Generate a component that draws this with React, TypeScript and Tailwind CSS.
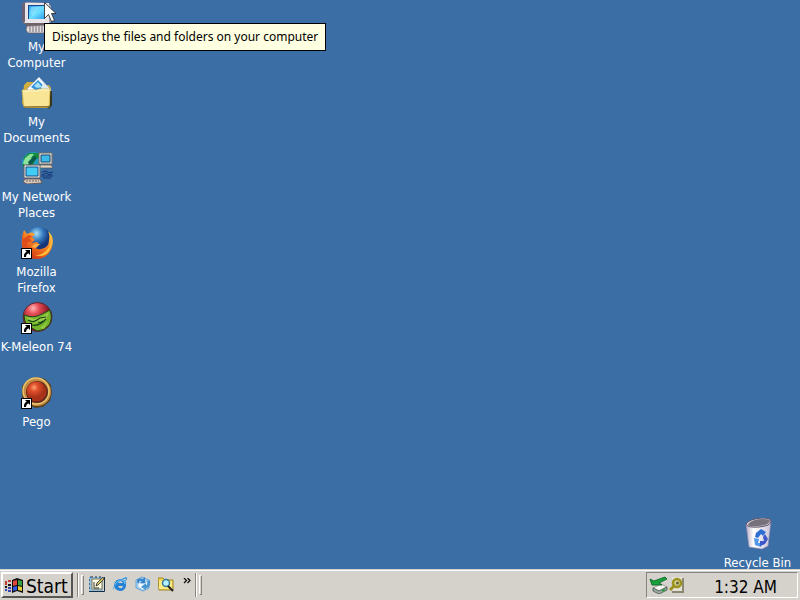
import type { ReactNode } from "react";

function Svg({ size = 32, children }: { size?: 16 | 32; children: ReactNode }) {
  return (
    <svg
      viewBox={size === 32 ? "0 0 32 32" : "0 0 16 16"}
      className={size === 32 ? "block h-8 w-8 shrink-0" : "block h-4 w-4 shrink-0"}
      aria-hidden="true"
    >
      {children}
    </svg>
  );
}

function Shortcut() {
  return (
    <g>
      <rect x="0.5" y="21.5" width="10" height="10" fill="#fff" stroke="#000" />
      <path d="M4 23h5v5l-1.700-1.700q-2.300 1-2.300 3.700h-2q-.5-4 2.700-5.300z" fill="#000" />
    </g>
  );
}

function ComputerIcon() {
  return (
    <Svg>
      <defs>
        <linearGradient id="screen" x2="1" y2="1">
          <stop offset="0" stopColor="#2b9df0" />
          <stop offset=".5" stopColor="#6fe0ff" />
          <stop offset="1" stopColor="#2c9cf0" />
        </linearGradient>
      </defs>
      <path d="M1 2 5 0l22 1 3 3v16l-4 3-22-1-3-3z" fill="#a9a3ae" />
      <path d="m1 2 4-2v19l-4 2z" fill="#6c5f72" />
      <path d="M4 1h24v20H4z" fill="#e9e5e8" />
      <path d="M7 3h17v14H7z" fill="#15458a" />
      <path d="M8 4h16v13H8z" fill="url(#screen)" />
      <path d="m10 5 9 0-7 9-3-3z" fill="#9cecff" opacity=".5" />
      <path d="M3 21h25l-1 3H6z" fill="#6c6267" />
      <path d="m6 24 20-1 3 5-2 3H7l-2-3z" fill="#e0dbdc" stroke="#665b60" strokeWidth=".7" />
      <path d="M8 25h16M8 27h17M8 29h16" stroke="#77717a" strokeDasharray="2 1" />
    </Svg>
  );
}

function DocumentsIcon() {
  return (
    <Svg>
      <path d="M3 8 6 5h7l3 3h12l2 3v17l-2 3H4l-3-5z" fill="#d3ae3d" />
      <path d="m6 12 12-12 12 13-3 7H9z" fill="#f8fbff" stroke="#8ba3c6" strokeWidth=".7" />
      <path d="m10 10 7-7 7 7-5 6z" fill="#3294dc" />
      <path d="m13 9 4-4 4 5-5 1z" fill="#a0def6" />
      <path d="m22 6 8 8-3 5-7-8z" fill="#dce9ef" />
      <path d="M30 14v14l-3 3" fill="none" stroke="#37351e" strokeWidth="2" />
      <path d="M1 13h14l3-1h11l-1 18H3z" fill="#f8e596" stroke="#d5b650" strokeWidth=".7" />
      <path d="M2 14h14l3-1h9" fill="none" stroke="#fff9cf" />
      <path d="m3 30 25-.3" stroke="#6f5820" />
    </Svg>
  );
}

function NetworkIcon() {
  return (
    <Svg>
      <circle cx="12" cy="11" r="11" fill="#219ac0" />
      <path d="M2 6 8 1l9 0 3 4-5 2-3 5 4 3-3 5-8 0-4-7 3-3z" fill="#128b3c" />
      <path d="M4 6 9 2l4 0-3 4 3 1-4 4-5 3-2-3z" fill="#8ce49a" />
      <path d="m7 10 6-6 3 2-7 8z" fill="#0b5a4c" />
      <path d="M18 1h13v11H18z" fill="#e2e2d9" stroke="#756e69" />
      <path d="M20 3h9v7h-9z" fill="#3bb9e9" stroke="#1d4971" />
      <path d="M18 13h12l2 3H17z" fill="#ded5c4" stroke="#594f48" strokeWidth=".7" />
      <path d="M3 13h16v13H3z" fill="#e8e9e5" stroke="#655e65" />
      <path d="M5 15h12v9H5z" fill="#42cbf5" stroke="#164a82" />
      <path d="m4 27 15 0 2 4-15 1-4-2z" fill="#d9cbbb" stroke="#594a4a" strokeWidth=".8" />
      <path d="M5 29h13" stroke="#6d6369" strokeDasharray="2 1" />
      <path d="M20 24h12M21 20l4-1 3 2 4-1M21 23l4-2 3 2 3-1M22 26h8" fill="none" stroke="#143575" />
    </Svg>
  );
}

function FirefoxIcon() {
  return (
    <Svg>
      <defs>
        <radialGradient id="fxGlobe" cx=".4" cy=".25">
          <stop stopColor="#a8e1f6" />
          <stop offset=".5" stopColor="#397fc3" />
          <stop offset="1" stopColor="#15377a" />
        </radialGradient>
        <linearGradient id="fxFur" x1=".2" x2=".8" y1="1" y2="0">
          <stop stopColor="#c72b13" />
          <stop offset=".5" stopColor="#f47a21" />
          <stop offset="1" stopColor="#ffd044" />
        </linearGradient>
      </defs>
      <circle cx="18" cy="13" r="13" fill="url(#fxGlobe)" />
      <path d="M27 4q7 6 4 16-4 12-16 12Q3 31 1 19 0 9 3 3l3 4q4-3 8 0l-3 3 3 3-4 3 6-1 2 2-4 3q2 3 6 2 8-1 8-9 1-5-1-9z" fill="url(#fxFur)" />
      <path d="m3 5-1 7 6-4 4 2-4 1 3 3-5 2q0 8 8 10-9-1-12-8-2-7 1-13z" fill="#df4d1c" />
      <path d="m10 20 4-3 5 0-4 4z" fill="#ffb046" />
      <path d="M29 7q3 10-3 16-5 6-13 5 13 4 17-8 2-7-1-13z" fill="#ffc13c" />
      <Shortcut />
    </Svg>
  );
}

function MeleonIcon() {
  return (
    <Svg>
      <defs>
        <radialGradient id="meleonRed" cx=".35" cy=".2">
          <stop stopColor="#ffb6b6" />
          <stop offset=".4" stopColor="#e64d57" />
          <stop offset="1" stopColor="#911c27" />
        </radialGradient>
      </defs>
      <circle cx="16.500" cy="15" r="14.500" fill="url(#meleonRed)" stroke="#5a2631" />
      <path d="M3 13q10 4 18-1l8-4q3 9-1 15-5 6-12 6L6 23q-3-4-3-10z" fill="#76b42b" stroke="#21441b" />
      <path d="m5 15 9 2 8-3 6-4-3 7-9 4-8-2z" fill="#9acb48" />
      <path d="M7 18q5 3 9 0l3-2 6-1M10 23q8 2 15-6M17 20l2 1 3-2" stroke="#17451a" fill="none" strokeWidth="1.200" />
      <path d="m19 26 8-7-4 8z" fill="#8fca41" />
      <Shortcut />
    </Svg>
  );
}

function PegoIcon() {
  return (
    <Svg>
      <defs>
        <radialGradient id="pego" cx=".38" cy=".3">
          <stop stopColor="#ffa070" />
          <stop offset=".4" stopColor="#df4f2c" />
          <stop offset="1" stopColor="#a83219" />
        </radialGradient>
      </defs>
      <path d="M8 2 16 0l8 2 6 6 1 8-2 8-7 6-8 1-8-4-5-7V9z" fill="#5c4220" />
      <circle cx="16" cy="15" r="14" fill="#c58d43" />
      <circle cx="15" cy="14" r="13" fill="none" stroke="#ebc66d" strokeWidth="1.5" />
      <circle cx="16" cy="15" r="11" fill="#60291c" />
      <circle cx="15.500" cy="14.500" r="10" fill="url(#pego)" />
      <Shortcut />
    </Svg>
  );
}

function RecycleIcon() {
  return (
    <Svg>
      <defs>
        <linearGradient id="bin">
          <stop stopColor="#b3abc3" />
          <stop offset=".3" stopColor="#fff" />
          <stop offset="1" stopColor="#c8c3d5" />
        </linearGradient>
      </defs>
      <path d="m4 6 25-3-3 25-6 3-13-2z" fill="url(#bin)" stroke="#9488ae" strokeWidth=".6" />
      <path d="M4 6Q7 1 20 0q9 0 9 3 0 5-12 6Q5 10 4 6z" fill="#d7d1dd" stroke="#625367" />
      <path d="M6 6q5-5 15-5 7 0 7 2-2 5-13 5-9 1-9-2z" fill="#77717b" />
      <path d="m14 15 5-4 5 3-3 4-2-2-3 4-3-1z" fill="#2d6ed5" />
      <path d="m12 20 5 1-1 4 4 0-1 4-6-2z" fill="#5098ec" />
      <path d="m23 16 3 5-3 5-5 2v-5l4 0-1-4z" fill="#3d56c8" />
    </Svg>
  );
}

function WindowsIcon() {
  return (
    <svg viewBox="0 0 20 16" className="block h-4 w-5 shrink-0" aria-hidden="true">
      <path d="m7 2 5-2 6 2v13l-6-2-5 2z" fill="#100f13" />
      <path d="m8 3 4-1v5L8 8z" fill="#df4936" />
      <path d="m13 2 4 1v5l-4-1z" fill="#39a143" />
      <path d="m8 9 4-1v4l-4 1z" fill="#305ae4" />
      <path d="m13 8 4 1v4l-4-1z" fill="#edcf37" />
      <path d="M0 4h2m1-1h3M0 6h2" stroke="#c13b30" strokeWidth="2" />
      <path d="M3 7h3M0 9h2" stroke="#181515" strokeWidth="2" />
      <path d="M3 10h3M0 12h2m1 1h3" stroke="#3641b2" strokeWidth="2" />
    </svg>
  );
}

function ShowDesktopIcon() {
  return (
    <Svg size={16}>
      <path d="M0 1h14v14H0z" fill="#8fbce0" />
      <path d="M0 15.500h15.500V1" fill="none" stroke="#152b40" />
      <path d="M3 3h10v10H3z" fill="#fffde4" stroke="#837b4a" />
      <path d="M1 1h3m2 0h2m2 0h2M0 3v2m0 2v2m0 2v2" stroke="#182f42" />
      <path d="m7 10 1-3 6-6 1 2-6 6z" fill="#d7c66c" stroke="#222" strokeWidth=".8" />
      <path d="M5 6v6h5" fill="none" stroke="#333" />
    </Svg>
  );
}

function ExplorerIcon() {
  return (
    <Svg size={16}>
      <path d="M14 10q-1 5-6 5-6-1-6-6 1-6 7-6 6 0 5 7H6q1 3 4 2l1-2zM6 7h5q-1-2-3-2t-2 2z" fill="#2482d6" fillRule="evenodd" />
      <path d="M3 9q2-5 7-5 3 0 3 4" fill="none" stroke="#70cef9" />
      <path d="M2 14Q-1 14 3 9q6-7 11-8 3 1-1 5 2-4-1-3-4 1-9 7-3 4-1 4z" fill="#399be5" />
    </Svg>
  );
}

function OutlookIcon() {
  return (
    <Svg size={16}>
      <path d="m1 4 6-3 7 3v8l-6 3-7-3z" fill="#a7d0f1" stroke="#6ba6d6" />
      <path d="m3 6 5 2 5-3v6l-5 3-5-3z" fill="#f1f8fd" stroke="#8bbce0" strokeWidth=".7" />
      <path d="M2 6Q2 1 8 3l2-2v6H5l2-2Q3 4 4 8z" fill="#3384cc" />
      <path d="M15 4q1 8-4 8v2l-5-3 5-4v2q2 0 1-4z" fill="#4a95d4" />
    </Svg>
  );
}

function SearchIcon() {
  return (
    <Svg size={16}>
      <path d="M0 2h5l2 2h8v10H1z" fill="#f4d34e" stroke="#a08523" />
      <path d="M1 5h13v8H1z" fill="#ffec83" />
      <circle cx="8" cy="7" r="3.500" fill="#b6f0fa" stroke="#347a99" strokeWidth="1.500" />
      <path d="m10 10 5 5" stroke="#222" strokeWidth="2" />
    </Svg>
  );
}

function UnplugIcon() {
  return (
    <svg viewBox="0 0 20 18" className="block h-[18px] w-5 shrink-0" aria-hidden="true">
      <path d="m4 12 8-4 6 3-8 4z" fill="#f4f3ee" stroke="#777f7a" strokeWidth=".7" />
      <path d="m4 12 6 3 8-4v3l-8 4-6-3z" fill="#9faea6" stroke="#34463e" strokeWidth=".7" />
      <path d="m13 15 3-1.500" stroke="#24a338" strokeWidth="1.500" />
      <path d="m16 1 2 2-8 4 3 2-10 0-2-6 4 2z" fill="#18a33a" stroke="#075b24" strokeWidth=".8" />
    </svg>
  );
}

function MagnifyTrayIcon() {
  return (
    <Svg size={16}>
      <path d="M3 0h11v15H3z" fill="#e4e2d6" />
      <path d="M14 1v14H3" stroke="#8c8775" strokeWidth="2" fill="none" />
      <circle cx="8" cy="6" r="4" fill="#d4d095" stroke="#9a921d" strokeWidth="2.500" />
      <path d="m5 9-4 4" stroke="#9a921d" strokeWidth="3" />
      <circle cx="8.500" cy="6" r="1.500" fill="#696332" />
    </Svg>
  );
}

function ChevronsIcon() {
  return (
    <svg viewBox="0 0 8 6" className="block h-1.5 w-2" aria-hidden="true">
      <path d="m1 0 2.500 2.500L1 5m3.500-5L7 2.500 4.500 5" fill="none" stroke="#111" strokeWidth="1.300" />
    </svg>
  );
}

function DesktopItem({ icon, lines }: { icon: ReactNode; lines: string[] }) {
  return (
    <button type="button" className="flex w-[73px] flex-col items-center gap-[5px] pt-0.5 text-white">
      {icon}
      <span className="text-center leading-4 whitespace-nowrap">
        {lines.map((line) => (
          <span key={line} className="block">{line}</span>
        ))}
      </span>
    </button>
  );
}

function Grip() {
  return (
    <span className="flex h-6 items-center gap-0.5">
      <span className="h-6 w-0.5 border-r border-l border-r-white border-l-[#87837e]" />
      <span className="h-5 w-[3px] border border-t-white border-r-[#87837e] border-b-[#87837e] border-l-white" />
    </span>
  );
}

const desktopItems = [
  { icon: <ComputerIcon />, lines: ["My", "Computer"] },
  { icon: <DocumentsIcon />, lines: ["My", "Documents"] },
  { icon: <NetworkIcon />, lines: ["My Network", "Places"] },
  { icon: <FirefoxIcon />, lines: ["Mozilla", "Firefox"] },
  { icon: <MeleonIcon />, lines: ["K-Meleon 74"] },
  { icon: <PegoIcon />, lines: ["Pego"] },
];

const launchers = [
  { label: "Show Desktop", icon: <ShowDesktopIcon /> },
  { label: "Internet Explorer", icon: <ExplorerIcon /> },
  { label: "Outlook Express", icon: <OutlookIcon /> },
  { label: "Search", icon: <SearchIcon /> },
];

export default function App() {
  return (
    <div className="relative flex h-screen flex-col overflow-hidden bg-[#3b6ea5] font-['DejaVu_Sans_Condensed','DejaVu_Sans',sans-serif] text-[13px] font-normal [font-stretch:condensed]">
      <main className="flex min-h-0 flex-1 justify-between">
        <div className="grid auto-rows-[75px] content-start">
          {desktopItems.map((item) => (
            <DesktopItem key={item.lines.join(" ")} {...item} />
          ))}
        </div>
        <div className="-mb-0.5 self-end pr-1.5">
          <DesktopItem icon={<RecycleIcon />} lines={["Recycle Bin"]} />
        </div>
      </main>

      <div role="tooltip" className="absolute top-[23px] left-[44px] border border-black bg-[#ffffe1] px-[7px] py-[5px] font-['Noto_Sans',sans-serif] text-xs leading-4 whitespace-nowrap text-black">
        Displays the files and folders on your computer
      </div>
      <svg viewBox="0 0 12 21" className="absolute top-[2px] left-[44px] h-[21px] w-3" aria-hidden="true">
        <path d="M.5.5v16l4-4 3 7 3-1-3-7h4.500z" fill="#fff" stroke="#222" strokeWidth=".8" />
      </svg>

      <footer className="flex h-[31px] shrink-0 items-center border-t border-[#d5d1cb] bg-[#d5d1cb] pt-px pr-0.5 pb-px pl-px text-black shadow-[inset_0_1px_0_#fff]">
        <button type="button" className="flex h-[26px] w-[72px] items-center gap-px border-2 border-t-white border-r-[#555] border-b-[#555] border-l-white pt-0.5 pl-0.5 text-[19px] leading-5">
          <WindowsIcon />
          Start
        </button>
        <div className="flex items-center pl-1">
          <Grip />
        </div>
        <nav aria-label="Quick Launch" className="flex flex-1 items-center gap-[7px] pl-[5px]">
          {launchers.map((item) => (
            <button key={item.label} type="button" aria-label={item.label} className="pb-0.5">{item.icon}</button>
          ))}
          <div className="flex items-center gap-1 pl-0.5">
            <button type="button" aria-label="More Quick Launch items" className="flex h-5 items-start pt-[3px]">
              <ChevronsIcon />
            </button>
            <Grip />
          </div>
        </nav>
        <div className="flex h-[26px] w-[152px] items-center border border-t-[#87837e] border-r-white border-b-white border-l-[#87837e] pr-5 pl-0.5">
          <span className="flex items-center pb-px">
            <UnplugIcon />
            <MagnifyTrayIcon />
          </span>
          <time className="ml-auto pt-1 text-[17px] leading-5">1:32 AM</time>
        </div>
      </footer>
    </div>
  );
}
